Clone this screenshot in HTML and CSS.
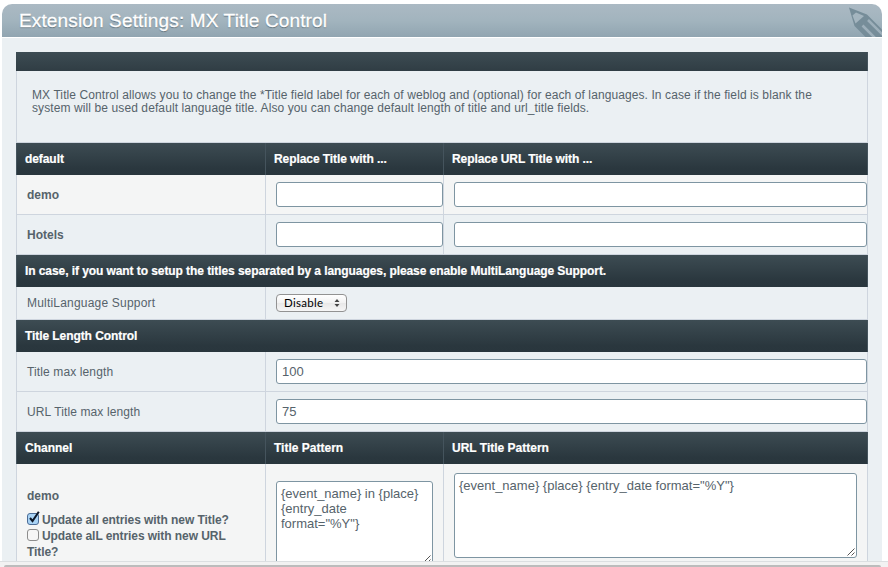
FILE: index.html
```html
<!DOCTYPE html>
<html lang="en">
<head>
<meta charset="utf-8">
<title>Extension Settings</title>
<link rel="stylesheet" href="styles.css">
</head>
<body>
<main class="panel">
  <header class="panel-head">
    <h1>Extension Settings: MX Title Control</h1>
    <svg class="pencil" width="36" height="33" viewBox="0 0 36 33" fill="none">
      <path d="M3 3.500 L21 10.500 L48 37.500 L34.500 48 L8.500 22 Z" fill="#768d99"/>
      <path d="M10 8.500 L18 12 L9.500 19.500 L6.500 11.500 Z" fill="#a4b5bf"/>
      <path d="M22 16 L42 36 M16.500 21.500 L37 42" stroke="#9dafba" stroke-width="2.600"/>
    </svg>
  </header>
  <div class="panel-body">
    <section class="table">
      <div class="bar bar-thin"></div>
      <p class="intro"><span class="i1">MX Title Control allows you to change the *Title field label for each of weblog and (optional) for each of languages. In case if the field is blank the</span><br><span class="i2">system will be used default language title. Also you can change default length of title and url_title fields.</span></p>

      <div class="row bar"><b>default</b><b>Replace Title with ...</b><b>Replace URL Title with ...</b></div>
      <div class="row field odd"><label class="strong">demo</label><div><input type="text"></div><div><input type="text"></div></div>
      <div class="row field"><label class="strong">Hotels</label><div><input type="text"></div><div><input type="text"></div></div>

      <div class="bar bar-full"><b>In case, if you want to setup the titles separated by a languages, please enable MultiLanguage Support.</b></div>
      <div class="row wide select-row"><label>MultiLanguage Support</label><div><span class="select">Disable<svg width="6" height="8" viewBox="0 0 6 8" fill="#444"><path d="M3 0 L5.500 3 H.5Z M3 8 L5.500 5 H.5Z"/></svg></span></div></div>

      <div class="bar bar-full"><b>Title Length Control</b></div>
      <div class="row wide field"><label>Title max length</label><div><input type="text" value="100"></div></div>
      <div class="row wide field"><label>URL Title max length</label><div><input type="text" value="75"></div></div>

      <div class="row bar bar-pattern"><b>Channel</b><b>Title Pattern</b><b>URL Title Pattern</b></div>
      <div class="row patterns odd">
        <div class="channel">
          <strong class="name">demo</strong>
          <div class="opt"><svg class="check" width="13" height="15" viewBox="0 0 13 15"><rect x=".5" y="2.500" width="11" height="11" rx="2.500" fill="#a9d3f5" stroke="#4c6c96"/><path d="M3 7 L5.500 10 L11.800 .8" fill="none" stroke="#0c1626" stroke-width="2"/></svg>Update all entries with new Title?</div>
          <div class="opt"><svg class="check" width="13" height="15" viewBox="0 0 13 15"><rect x=".5" y="2.500" width="11" height="11" rx="2.500" fill="#f6f6f6" stroke="#8d8d8d"/></svg>Update alL entries with new URL</div>
          <div class="opt">Title?</div>
        </div>
        <div class="ta-cell"><div class="ta ta-small">{event_name} in {place}<br>{entry_date<br>format="%Y"}<svg class="grip" width="8" height="8" viewBox="0 0 8 8" stroke="#555"><path d="M.5 7.500 L7.500 .5 M4.500 7.500 L7.500 4.500"/></svg></div></div>
        <div class="ta-cell"><div class="ta ta-large">{event_name} {place} {entry_date format="%Y"}<svg class="grip" width="8" height="8" viewBox="0 0 8 8" stroke="#555"><path d="M.5 7.500 L7.500 .5 M4.500 7.500 L7.500 4.500"/></svg></div></div>
      </div>
    </section>
  </div>
</main>
<footer class="scroll"><div class="thumb"></div></footer>
</body>
</html>
```
FILE: styles.css
```css
* { box-sizing: border-box; }
body {
  margin: 0;
  height: 567px;
  overflow: hidden;
  background: #fff;
  color: #56636b;
  font: 12px/13px "Liberation Sans", Arial, sans-serif;
  display: flex;
  flex-direction: column;
}
.panel { margin: 4px 6px 0 2px; height: 557px; overflow: hidden; flex: none; }
.panel-head {
  height: 33px;
  display: flex;
  justify-content: space-between;
  padding-left: 17px;
  border-radius: 10px 10px 0 0;
  background: linear-gradient(#abb9c3, #a2b4be 50%, #91a5b1);
  overflow: hidden;
}
h1 {
  margin: 0;
  font-size: 19px;
  line-height: 33px;
  font-weight: 400;
  letter-spacing: .14px;
  color: #fff;
  -webkit-text-stroke: .3px #fff;
  text-shadow: 0 1px 1px #5d6c75;
  white-space: nowrap;
}
.panel-body { margin-top: 1px; height: 523px; padding: 14px; background: #ebf0f3; }
.table { width: 852px; white-space: nowrap; }
.bar {
  height: 32px;
  background: linear-gradient(#3d4c53, #2a373e 80%, #29363d);
  color: #fff;
  border-right: 1px solid #45545d;
}
.bar b {
  display: block;
  padding-left: 8px;
  line-height: 32px;
  border-left: 1px solid #45545d;
  letter-spacing: -.075px;
  -webkit-text-stroke: .2px #fff;
}
.bar-pattern b { letter-spacing: 0; }
.bar-thin { height: 19px; background: linear-gradient(#3d4c53, #303d44); }
.intro {
  margin: 0;
  height: 72px;
  padding: 18px 15px 0;
  border: solid #ced5de;
  border-width: 0 1px 1px;
}
.i1 { letter-spacing: .092px; }
.i2 { letter-spacing: .1px; }
.row { display: grid; grid-template-columns: 249px 178px 1fr; }
.wide { grid-template-columns: 249px 1fr; }
.field, .select-row, .patterns { border-right: 1px solid #ced5de; }
.field > *, .select-row > *, .patterns > * { border-left: 1px solid #ced5de; min-width: 0; }
.field { height: 40px; border-bottom: 1px solid #ced5de; }
.field label { padding-left: 10px; line-height: 41px; height: 39px; letter-spacing: .12px; }
.field > div { padding: 7px 0 0 10px; }
.odd { background: #f4f5f5; }
.field .strong { font-weight: 700; letter-spacing: 0; }
input {
  display: block;
  width: 100%;
  height: 25px;
  padding: 0 5px;
  border: 1px solid #7e95a2;
  border-radius: 3px;
  background: #fff;
  color: #56636b;
  font: 13px "Liberation Sans", Arial, sans-serif;
}
.select-row { height: 33px; border-bottom: 1px solid #ced5de; }
.select-row label { padding-left: 10px; line-height: 32px; letter-spacing: .2px; }
.select-row > div { padding: 7px 0 0 10px; }
.select {
  display: flex;
  align-items: center;
  justify-content: space-between;
  width: 71px;
  height: 18px;
  padding: 0 6px 0 7px;
  border: 1px solid #929292;
  border-radius: 4px;
  background: linear-gradient(#fff, #f2f2f2 50%, #e8e8e8 51%, #f6f6f6);
  color: #000;
  font: 11.5px/16px Lato, sans-serif;
  letter-spacing: .3px;
}
.patterns { height: 150px; }
.channel { padding: 25px 0 0 10px; font-weight: 700; letter-spacing: -.07px; }
.name { display: block; margin-bottom: 9px; line-height: 14px; letter-spacing: 0; }
.opt { display: flex; align-items: center; height: 16px; line-height: 16px; }
.check { margin: 0 2px 3px 0; flex: none; }
.ta-cell { padding: 9px 10px 0; }
.ta {
  position: relative;
  border: 1px solid #7e95a2;
  border-radius: 3px;
  background: #fff;
  padding: 4px;
  font-size: 13px;
  line-height: 15px;
}
.ta-small { margin-top: 8px; height: 84px; }
.ta-large { height: 85px; }
.grip { position: absolute; right: 1px; bottom: 1px; }
.scroll { height: 6px; border-top: 1px solid #dcdfe1; background: #f2f2f2; flex: none; padding: 3px 7px 0 4px; }
.thumb { height: 2px; border-radius: 2px 2px 0 0; background: #bcbcbc; }
```
